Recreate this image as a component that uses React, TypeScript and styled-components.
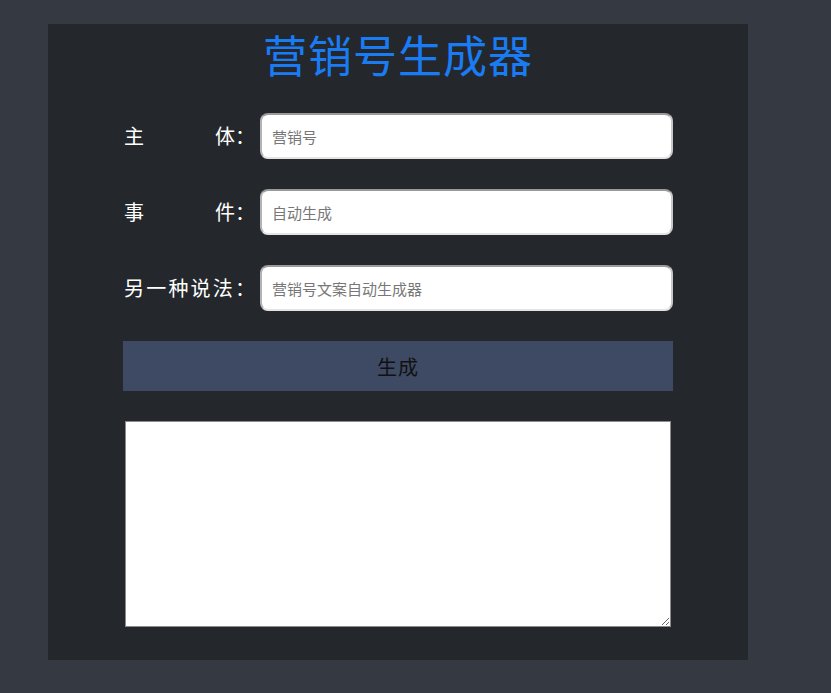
import React from "react";
import styled, { createGlobalStyle } from "styled-components";

const GlobalStyle = createGlobalStyle`
  html, body {
    margin: 0;
    padding: 0;
    background: #353941;
  }
  body {
    font-family: "Noto Sans CJK SC", "Noto Sans", sans-serif;
  }
  * { box-sizing: border-box; }
`;

const Page = styled.div`
  min-height: 693px;
  padding: 24px 0 0 48px;
`;

const Panel = styled.main`
  width: 700px;
  height: 636px;
  background: #24282c;
  display: flex;
  flex-direction: column;
  align-items: center;
`;

const Title = styled.h1`
  margin: 0 0 29px;
  height: 60px;
  line-height: 60px;
  font-size: 44px;
  font-weight: 400;
  letter-spacing: 1px;
  color: #1a7cf5;
  font-family: "Noto Sans CJK SC", sans-serif;
`;

const Form = styled.div`
  width: 550px;
  display: flex;
  flex-direction: column;
  gap: 30px;
`;

const Row = styled.div`
  display: flex;
  align-items: center;
  height: 46px;
`;

const Label = styled.label`
  width: 131px;
  margin-left: 1px;
  margin-right: 5px;
  display: flex;
  justify-content: space-between;
  color: #ffffff;
  font-size: 20px;
  line-height: 1;
  white-space: nowrap;
`;

const Input = styled.input`
  flex: 1;
  height: 46px;
  border-radius: 8px;
  border-width: 2px;
  border-style: solid;
  border-color: #9a9a9a #c8c8c8 #e4e4e4 #b4b4b4;
  background: #fff;
  padding: 0 10px;
  font-size: 15px;
  font-family: "Noto Sans CJK SC", sans-serif;
  color: #222;
  outline: none;
  &::placeholder { color: #777; }
`;

const Button = styled.button`
  height: 50px;
  width: 100%;
  border: none;
  background: #3e4a63;
  color: #111;
  font-size: 20px;
  font-family: "Noto Sans CJK SC", sans-serif;
  letter-spacing: 1px;
  cursor: pointer;
`;

const Output = styled.textarea`
  width: 546px;
  height: 206px;
  margin-left: 2px;
  border: 1px solid #8a8a8a;
  background: #fff;
  font-family: "Noto Sans CJK SC", sans-serif;
  font-size: 14px;
  padding: 2px;
`;

const fields: { label: string[]; placeholder: string }[] = [
  { label: ["主", "体："], placeholder: "营销号" },
  { label: ["事", "件："], placeholder: "自动生成" },
  { label: ["另", "一", "种", "说", "法", "："], placeholder: "营销号文案自动生成器" },
];

export default function App() {
  return (
    <>
      <GlobalStyle />
      <Page>
        <Panel>
          <Title>营销号生成器</Title>
          <Form>
            {fields.map((f) => (
              <Row key={f.placeholder}>
                <Label>
                  {f.label.map((c, i) => (
                    <span key={i}>{c}</span>
                  ))}
                </Label>
                <Input placeholder={f.placeholder} />
              </Row>
            ))}
            <Button>生成</Button>
            <Output />
          </Form>
        </Panel>
      </Page>
    </>
  );
}
